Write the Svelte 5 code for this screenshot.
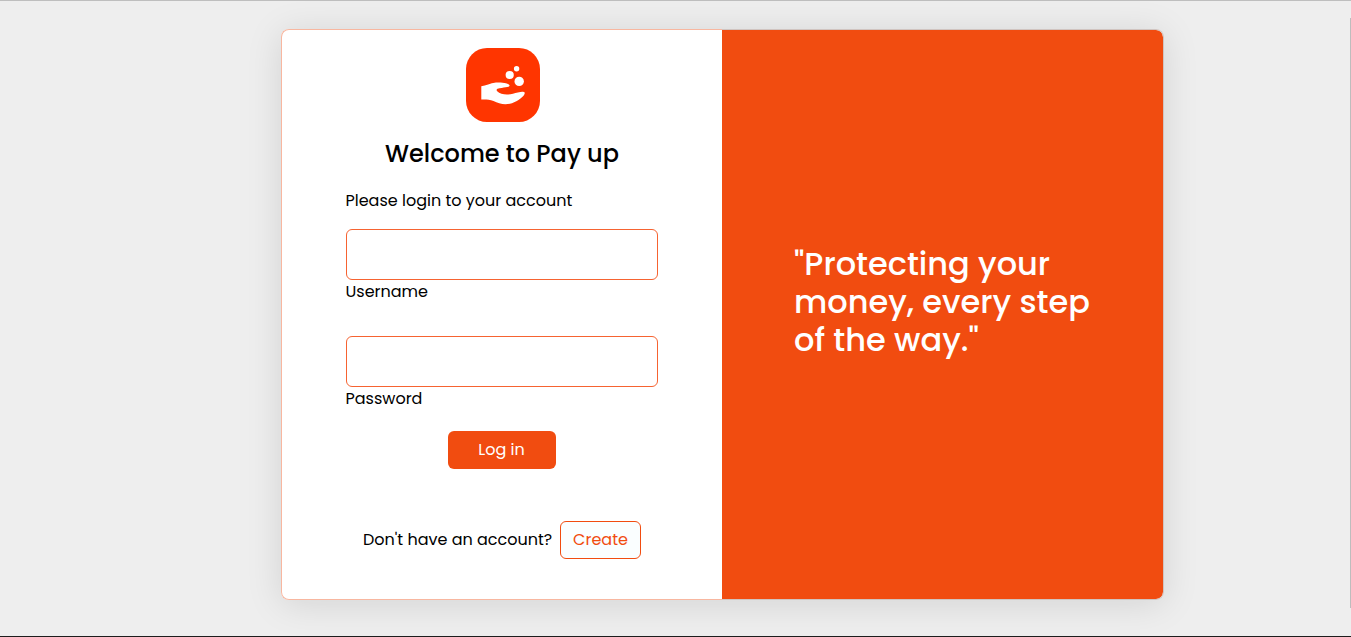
<script>
  let username = $state('');
  let password = $state('');
</script>

<main>
  <div class="card">
    <section class="login">
      <svg class="logo" viewBox="0 0 74 74" aria-hidden="true">
        <rect width="74" height="74" rx="21" fill="#ff3500" />
        <g fill="#fff">
          <path d="M15.3 38.3 C20 37.8 24 35.2 30 34.6 C36 34.2 43.2 35.2 43.6 37.4 C43.6 39.4 37 39.2 31.5 40.7 C30.4 41.2 30.4 42.4 31.2 43.2 C34.6 46.6 41 47.2 47 45.7 C51.5 44.5 57.5 42.6 58.7 44.6 C59.6 47.6 52 53.3 46 55.2 C39 57.2 33 55.8 27.5 53 C23.5 51.2 20 51.4 15.3 51.4 Z" />
          <circle cx="43.7" cy="27" r="4.1" />
          <circle cx="50.6" cy="20.7" r="2.7" />
          <circle cx="53.2" cy="33.4" r="4.7" />
        </g>
      </svg>
      <h1>Welcome to Pay up</h1>
      <form onsubmit={(e) => e.preventDefault()}>
        <p class="intro">Please login to your account</p>
        <div class="field">
          <input id="username" type="text" bind:value={username} />
          <label for="username">Username</label>
        </div>
        <div class="field">
          <input id="password" type="password" bind:value={password} />
          <label for="password">Password</label>
        </div>
        <button class="submit" type="submit">Log in</button>
        <div class="signup">
          <p>Don't have an account?</p>
          <button class="create" type="button">Create</button>
        </div>
      </form>
    </section>
    <section class="promo">
      <h2>"Protecting your money, every step of the way."</h2>
    </section>
  </div>
  <div class="scrollbar"></div>
</main>

<style>
  :global(body) { margin: 0; overflow: hidden; }
  * { box-sizing: border-box; }
  main {
    position: relative;
    height: 637px;
    padding: 28px 187px 0 281px;
    background: #eee;
    border-top: 1px solid #bebebe;
    border-bottom: 1px solid #1d1d1d;
    font-family: Poppins, Inter, sans-serif;
    font-size: 16px;
    color: #000;
  }
  .card {
    display: flex;
    width: 883px;
    height: 571px;
    border-radius: 8px;
    background: #fff;
    box-shadow: 0 4px 36px rgba(0, 0, 0, 0.115);
  }
  .login {
    width: 441px;
    padding: 18px 64px 0;
    border: 1px solid #f8b7a0;
    border-right: 0;
    border-radius: 8px 0 0 8px;
  }
  .logo { display: block; width: 74px; height: 74px; margin: 0 0 0 120px; }
  h1 {
    margin: 17px 0 0;
    font-size: 24px;
    line-height: 30px;
    font-weight: 500;
    text-align: center;
    white-space: nowrap;
  }
  p { margin: 0; line-height: 24px; white-space: nowrap; }
  .intro { margin: 20px 0 16px; text-indent: -0.5px; }
  .field { height: 107px; }
  input {
    display: block;
    width: 312px;
    height: 51px;
    padding: 6px 12px;
    border: 1px solid #f66331;
    border-radius: 6px;
    outline: 0;
    background: #fff;
    font: inherit;
  }
  label { display: block; width: max-content; line-height: 24px; text-indent: -0.5px; }
  button { font: inherit; border-radius: 6px; height: 38px; padding: 0 0 2px; white-space: nowrap; }
  .submit {
    display: block;
    width: 108px;
    margin: -12px auto 0;
    padding-right: 1px;
    border: 0;
    background: #f14c10;
    color: #fff;
  }
  .signup { display: flex; align-items: center; margin: 52px 0 0 17px; }
  .signup p { width: 197px; }
  .create { width: 81px; border: 1px solid #f14c10; background: #fafeff; color: #f14c10; }
  .promo {
    flex: 1;
    padding: 215px 60px 0 72px;
    border: 1px solid #d0c4c0;
    border-left: 0;
    border-radius: 0 8px 8px 0;
    background: #f14c10;
    background-clip: padding-box;
    color: #fff;
  }
  h2 { margin: 0; font-size: 32px; line-height: 38px; font-weight: 500; }
  .scrollbar { position: absolute; right: 0; top: 17px; width: 1px; height: 590px; background: #bdbdbd; }
</style>
